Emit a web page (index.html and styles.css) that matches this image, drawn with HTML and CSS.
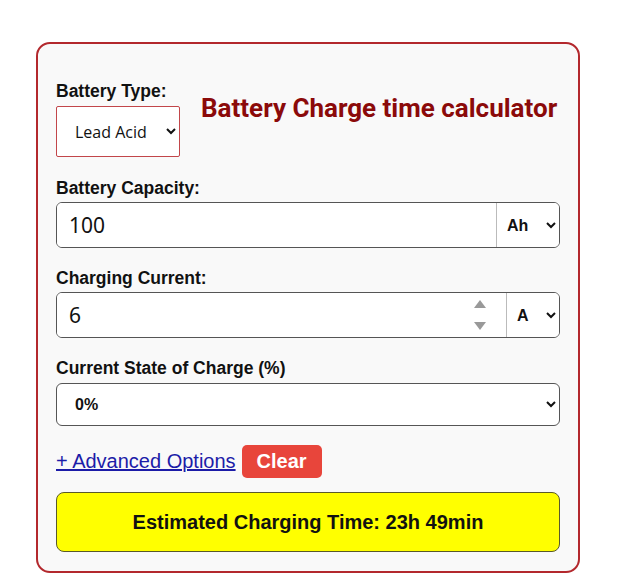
FILE: index.html
```html
<!DOCTYPE html>
<html lang="en">
<head>
    <meta charset="UTF-8">
    <meta name="viewport" content="width=device-width, initial-scale=1.0">
    <title>Battery Charge time calculator</title>
    <link rel="stylesheet" href="styles.css">
</head>
<body>
    <div class="calc">
        <div class="top-row">
            <div class="field">
                <label for="type">Battery Type:</label>
                <select id="type" class="type-select">
                    <option>Lead Acid</option>
                    <option>Lithium</option>
                </select>
            </div>
            <h2 class="title">Battery Charge time calculator</h2>
        </div>

        <label for="capacity">Battery Capacity:</label>
        <div class="group">
            <input id="capacity" class="value" type="text" value="100">
            <select class="unit unit-ah">
                <option>Ah</option>
                <option>mAh</option>
            </select>
        </div>

        <label for="current">Charging Current:</label>
        <div class="group">
            <input id="current" class="value" type="text" value="6">
            <span class="spin">
                <svg width="14" height="9" viewBox="0 0 14 9"><path d="M1 9 L7 1 L13 9 Z" fill="#999"/></svg>
                <svg width="14" height="9" viewBox="0 0 14 9"><path d="M1 0 L7 8 L13 0 Z" fill="#999"/></svg>
            </span>
            <select class="unit unit-a">
                <option>A</option>
                <option>mA</option>
            </select>
        </div>

        <label for="soc" class="soc-label">Current State of Charge (%)</label>
        <select id="soc" class="soc">
            <option>0%</option>
            <option>25%</option>
            <option>50%</option>
            <option>75%</option>
        </select>

        <div class="actions">
            <a href="#" class="advanced">+ Advanced Options</a>
            <button class="clear">Clear</button>
        </div>

        <div class="result">Estimated Charging Time: 23h 49min</div>
    </div>
</body>
</html>
```

FILE: styles.css
```css
body { margin: 0; background: #fff; font-family: "Liberation Sans", Arial, sans-serif; color: #111; }
.calc {
    width: 504px;
    margin: 42px 0 0 36px;
    padding: 37px 18px 19px 18px;
    border: 2px solid #b3282d;
    border-radius: 14px;
    background: #f9f9f9;
}
label { display: block; font-size: 17.5px; line-height: 20px; font-weight: bold; margin-bottom: 4px; }
.top-row { display: flex; align-items: flex-start; margin-bottom: 21px; }
.top-row label { margin-bottom: 5px; }
.title {
    margin: 12px 0 0 21px;
    font-family: Roboto, "Liberation Sans", sans-serif;
    font-size: 26px;
    line-height: 30px;
    font-weight: bold;
    color: #8b0a0a;
}
.type-select {
    width: 124px;
    height: 51px;
    padding: 0 8px 0 14px;
    border: 1px solid #c2464a;
    border-radius: 2px;
    background: #fff;
    font-family: "Open Sans", sans-serif;
    font-size: 16px;
    font-weight: 500;
    color: #111;
}
.group {
    display: flex;
    align-items: stretch;
    height: 44px;
    border: 1px solid #555;
    border-radius: 6px;
    background: #fff;
    margin-bottom: 20px;
    overflow: hidden;
}
.value {
    flex: 1;
    min-width: 0;
    border: none;
    outline: none;
    padding: 0 12px;
    font-family: "Noto Sans", sans-serif;
    font-size: 21px;
    color: #111;
    background: #fff;
}
.spin {
    display: flex;
    flex-direction: column;
    justify-content: center;
    gap: 14px;
    padding: 0 19px 0 8px;
}
.unit {
    border: none;
    border-left: 1px solid #bbb;
    background: #fff;
    padding: 0 4px 0 6px;
    font-family: "Liberation Sans", Arial, sans-serif;
    font-size: 16px;
    font-weight: bold;
    color: #111;
    outline: none;
}
.unit-ah { width: 63px; }
.unit-a { width: 53px; }
.soc-label { margin-bottom: 5px; }
.soc {
    display: block;
    width: 100%;
    height: 43px;
    padding: 0 8px 0 14px;
    border: 1px solid #555;
    border-radius: 6px;
    background: #fff;
    font-family: "Liberation Sans", Arial, sans-serif;
    font-size: 16px;
    font-weight: bold;
    color: #111;
    margin-bottom: 19px;
}
.actions { display: flex; align-items: center; gap: 6px; margin-bottom: 14px; }
.advanced { font-size: 20px; color: #1c1ca8; }
.clear {
    height: 33px;
    padding: 0 15px;
    border: none;
    border-radius: 5px;
    background: #e8453b;
    color: #fff;
    font-family: "Liberation Sans", Arial, sans-serif;
    font-size: 20px;
    font-weight: bold;
}
.result {
    height: 58px;
    display: flex;
    align-items: center;
    justify-content: center;
    border: 1px solid #5a5a2a;
    border-radius: 8px;
    background: #ffff00;
    font-size: 20px;
    font-weight: bold;
    color: #111;
}
```
